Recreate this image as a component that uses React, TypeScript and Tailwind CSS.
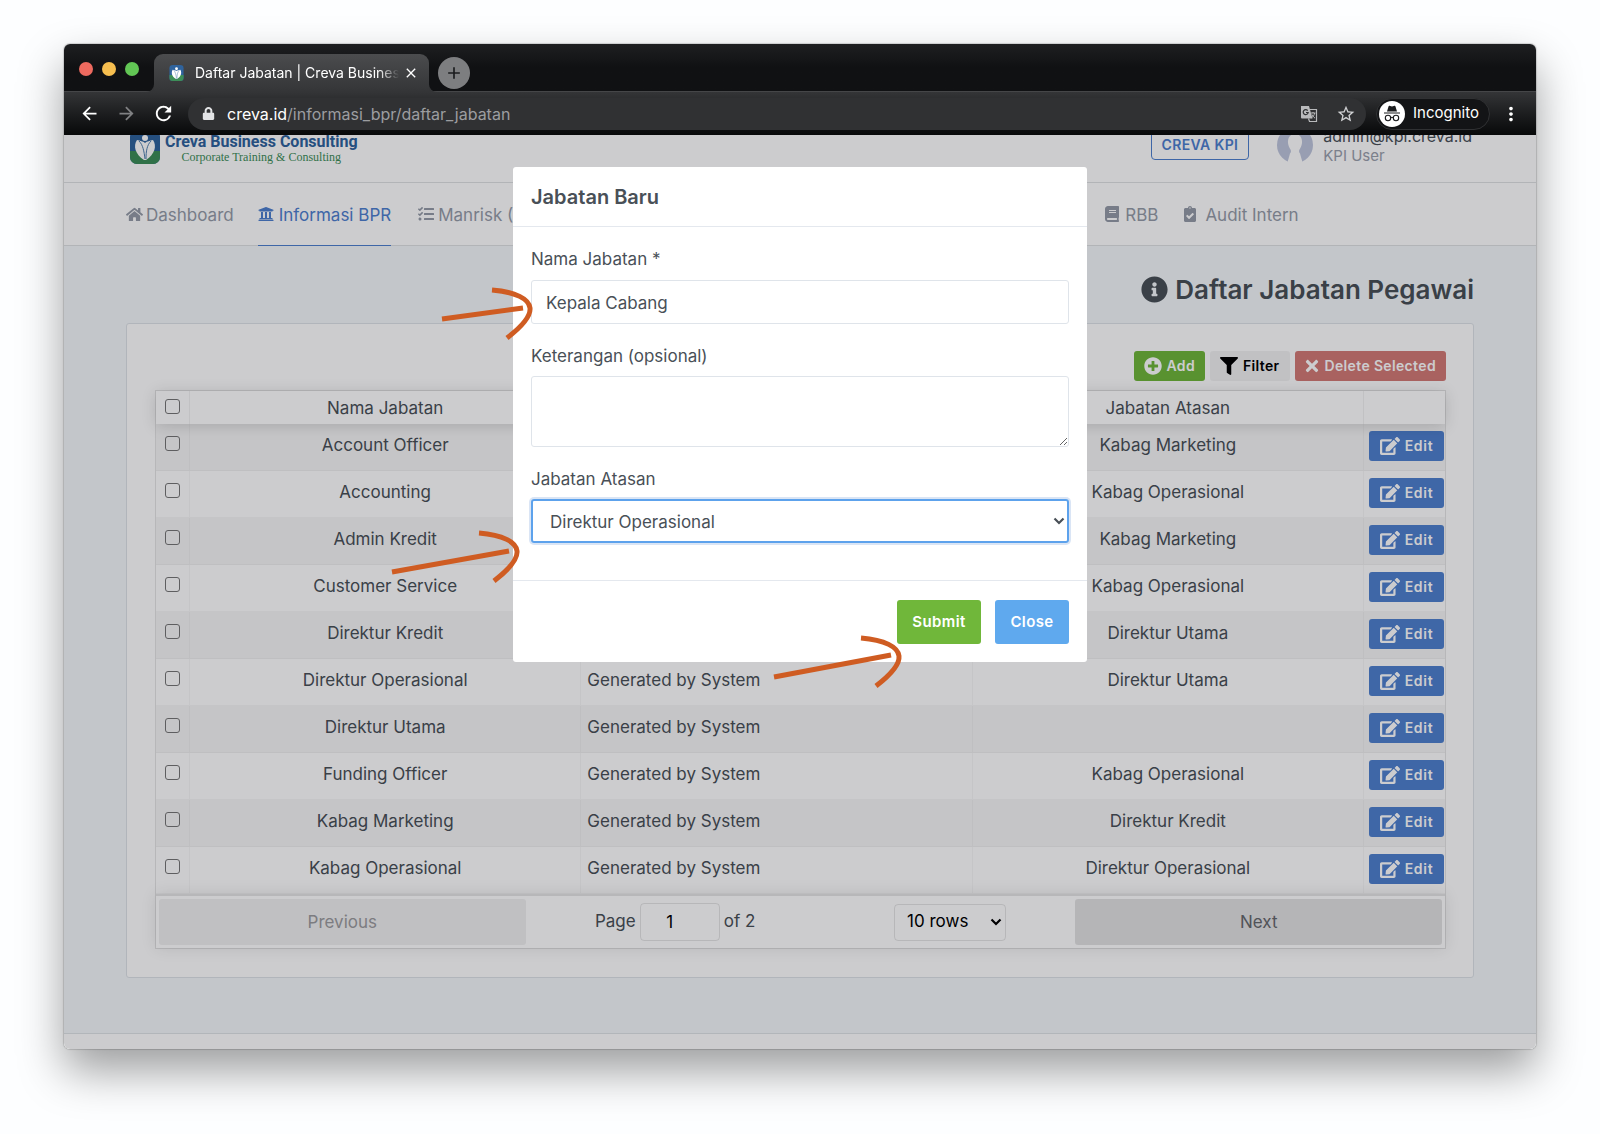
import React from "react";
import {
  FaBook,
  FaClipboardCheck,
  FaEdit,
  FaFilter,
  FaHome,
  FaInfoCircle,
  FaLock,
  FaPlusCircle,
  FaTasks,
  FaTimes,
  FaUniversity,
} from "react-icons/fa";
import { MdAdd, MdArrowBack, MdArrowForward, MdClose, MdMoreVert, MdRefresh, MdStarBorder } from "react-icons/md";

const rows = [
  { nama: "Account Officer", atasan: "Kabag Marketing" },
  { nama: "Accounting", atasan: "Kabag Operasional" },
  { nama: "Admin Kredit", atasan: "Kabag Marketing" },
  { nama: "Customer Service", atasan: "Kabag Operasional" },
  { nama: "Direktur Kredit", atasan: "Direktur Utama" },
  { nama: "Direktur Operasional", atasan: "Direktur Utama" },
  { nama: "Direktur Utama", atasan: "" },
  { nama: "Funding Officer", atasan: "Kabag Operasional" },
  { nama: "Kabag Marketing", atasan: "Direktur Kredit" },
  { nama: "Kabag Operasional", atasan: "Direktur Operasional" },
];

const LogoMark = ({ className }: { className: string }) => (
  <svg viewBox="0 0 30 34" className={className} aria-hidden="true">
    <rect width="30" height="34" rx="7" fill="#2f639d" />
    <path d="M0 21h30v6a7 7 0 0 1-7 7H7a7 7 0 0 1-7-7z" fill="#3d8e58" />
    <circle cx="15" cy="8" r="3" fill="#fff" />
    <path
      d="M7 10c-4 6-2 14 7 20h2c9-6 11-14 7-20-3 1-6 1-8 3-2-2-5-2-8-3z"
      fill="#fff"
    />
    <path d="M9 11c4 4 5 10 6 18M21 11c-4 4-5 10-5 18" fill="none" stroke="#4f7fae" strokeWidth="1" />
  </svg>
);

const TranslateIcon = () => (
  <svg viewBox="0 0 18 18" className="size-[18px] text-[#b9babc]" fill="none" aria-hidden="true">
    <path d="M9 4.500h7.500v12H9.500l-1-3" stroke="currentColor" strokeWidth="1.200" />
    <path d="M1 1h8l3.500 12.500H2a1 1 0 0 1-1-1z" fill="currentColor" />
    <path d="M7.700 5.600A2.500 2.500 0 1 0 8.200 7.500H6" stroke="#303133" strokeWidth="1.200" />
    <path d="M11 8h4.500M13 7v1M14.700 8c-.4 2-1.400 3.500-3 4.700M12 9.500c.7 1.500 1.800 2.700 3 3.700" stroke="currentColor" />
  </svg>
);

const Chevron = ({ className }: { className: string }) => (
  <svg viewBox="0 0 12 8" className={className} aria-hidden="true">
    <path d="M1.5 1.5 6 6l4.500-4.500" fill="none" stroke="currentColor" strokeWidth="2.200" />
  </svg>
);

const Arrow = ({ className, shaft }: { className: string; shaft: string }) => (
  <svg
    viewBox="0 0 132 56"
    className={`absolute h-14 w-[132px] pointer-events-none ${className}`}
    fill="none"
    stroke="#cf5c22"
    strokeWidth="5"
    aria-hidden="true"
  >
    <path d={shaft} />
    <path d="M89 5C113 7 126 14 127 23c1 9-10 20-23 30" />
  </svg>
);

const BrowserBar = () => {
  return (
    <div className="text-white">
      <div className="flex h-12 items-end bg-linear-to-b from-[#1e1f21] via-[#101113] to-[#101113] border-b border-[#454648]">
        <div className="mt-0.5 flex gap-[9px] self-center pl-[15px]">
          <span className="size-3.5 rounded-full bg-[#ed6a5f]" />
          <span className="size-3.5 rounded-full bg-[#f6be4f]" />
          <span className="size-3.5 rounded-full bg-[#62c655]" />
        </div>
        <div className="relative -mb-px ml-[15px] flex h-[38px] w-[275px] items-center rounded-t-[9px] bg-linear-to-b from-[#4b4c4e] to-[#343537] pl-[15px] pr-2.5">
          <svg viewBox="0 0 8 8" className="absolute bottom-0 -left-2 size-2" aria-hidden="true">
            <path d="M8 0v8H0a8 8 0 0 0 8-8z" fill="#343537" />
          </svg>
          <svg viewBox="0 0 8 8" className="absolute bottom-0 -right-2 size-2" aria-hidden="true">
            <path d="M0 0v8h8a8 8 0 0 1-8-8z" fill="#343537" />
          </svg>
          <LogoMark className="h-4 w-[15px]" />
          <span className="ml-[11px] flex-1 overflow-hidden whitespace-nowrap text-sm [mask-image:linear-gradient(to_right,black_90%,transparent)]">
            Daftar Jabatan | Creva Busines
          </span>
          <button type="button" aria-label="Close tab" className="ml-1">
            <MdClose className="size-4" />
          </button>
        </div>
        <button
          type="button"
          aria-label="New tab"
          className="mb-0.5 ml-[9px] flex size-8 items-center justify-center rounded-full bg-[#7d7e80] text-[#1b1c1e]"
        >
          <MdAdd className="size-5" stroke="currentColor" />
        </button>
      </div>

      <div className="flex h-[43px] items-center bg-linear-to-b from-[#343537] to-[#08090a] pl-[15px] pr-3.5">
        <button type="button" aria-label="Back">
          <MdArrowBack className="size-[21px]" />
        </button>
        <button type="button" aria-label="Forward" className="ml-4 text-[#808183]">
          <MdArrowForward className="size-[21px]" />
        </button>
        <button type="button" aria-label="Reload" className="ml-[15px]">
          <MdRefresh className="size-[23px]" />
        </button>
        <div className="ml-[13px] flex h-8 flex-1 items-center rounded-full bg-[#303133] pl-3.5 pr-2.5">
          <FaLock className="size-[13px] text-[#e2e3e5]" />
          <span className="ml-3 flex-1 text-base text-[#9c9da0]">
            <span className="text-white">creva.id</span>/informasi_bpr/daftar_jabatan
          </span>
          <TranslateIcon />
          <MdStarBorder className="ml-[18px] size-5 text-[#cfd0d2]" />
        </div>
        <div className="ml-2.5 flex h-8 items-center rounded-full border border-[#303133] bg-[#131416] pl-0.5 pr-2.5">
          <svg viewBox="0 0 26 26" className="size-[26px]" aria-hidden="true">
            <circle cx="13" cy="13" r="13" fill="#fff" />
            <path d="M9.500 5.500c.3-.9 1-.9 1.700-.5 1.200.5 2.400.5 3.600 0 .7-.4 1.400-.4 1.700.5l1.500 5H8z" fill="#1b1c1e" />
            <path d="M5 12h16" stroke="#1b1c1e" strokeWidth="1.200" />
            <circle cx="9" cy="17" r="2.700" fill="none" stroke="#1b1c1e" strokeWidth="1.100" />
            <circle cx="17" cy="17" r="2.700" fill="none" stroke="#1b1c1e" strokeWidth="1.100" />
            <path d="M11.700 16.700q1.300-.8 2.600 0" fill="none" stroke="#1b1c1e" strokeWidth="1.100" />
          </svg>
          <span className="ml-2 text-[15px]">Incognito</span>
        </div>
        <button type="button" aria-label="Menu" className="ml-2.5">
          <MdMoreVert className="size-[22px]" />
        </button>
      </div>
    </div>
  );
};

const PageHeader = () => {
  return (
    <>
      <header className="-mt-6 flex h-[72px] items-center border-b border-[#dfe1e3] bg-white pb-1 pl-[66px] pr-16">
        <a href="#" className="flex items-center gap-[5px] pt-1">
          <LogoMark className="h-[34px] w-[30px]" />
          <span className="flex flex-col items-center pt-[3px]">
            <span className="font-[Roboto,sans-serif] text-base font-bold leading-[18px] text-[#2f639d]">
              Creva Business Consulting
            </span>
            <span className="font-['Liberation_Serif',serif] text-xs leading-3 text-[#3d8e58]">
              Corporate Training &amp; Consulting
            </span>
          </span>
        </a>
        <button
          type="button"
          className="ml-auto h-[30px] rounded border border-[#4e80cf] px-2.5 text-sm font-semibold tracking-wide text-[#4e80cf]"
        >
          CREVA KPI
        </button>
        <svg viewBox="0 0 36 36" className="ml-7 size-9" aria-hidden="true">
          <circle cx="18" cy="18" r="18" fill="#bfc6dd" />
          <path d="M18 7c-5 0-7.500 4-7 9 .3 3 1.500 5 2.500 6.500.8 1.500.5 3-.5 4L10 37h16l-3-10.500c-1-1-1.300-2.500-.5-4 1-1.500 2.200-3.500 2.500-6.500.5-5-2-9-7-9z" fill="#fff" />
        </svg>
        <div className="ml-2.5 flex flex-col pt-0.5">
          <span className="text-base leading-5 text-[#495057]">admin@kpi.creva.id</span>
          <span className="text-[15px] leading-5 text-[#9aa0ac]">KPI User</span>
        </div>
      </header>

      <nav className="flex h-[63px] items-stretch border-b border-[#dfe1e3] bg-white pl-[62px] text-[17px] text-[#959ca8]">
        <a href="#" className="flex items-center gap-[3px] pt-1">
          <FaHome className="mb-1 size-[17px]" />
          Dashboard
        </a>
        <a href="#" className="-mb-px ml-6 flex items-center gap-[5px] border-b border-[#4e80cf] pt-1 text-[#4e80cf]">
          <FaUniversity className="mb-1 size-4" />
          Informasi BPR
        </a>
        <a href="#" className="ml-[27px] flex w-[686px] items-center gap-1 pt-1">
          <FaTasks className="mb-1 size-4" />
          Manrisk (SOP)
        </a>
        <a href="#" className="flex items-center gap-[5px] pt-1">
          <FaBook className="mb-1 size-4" />
          RBB
        </a>
        <a href="#" className="ml-6 flex items-center gap-[7px] pt-1">
          <FaClipboardCheck className="mb-1 size-4" />
          Audit Intern
        </a>
      </nav>
    </>
  );
};

const JabatanTable = () => {
  return (
    <div className="mt-[9px] border border-black/10">
      <table className="w-full table-fixed border-separate border-spacing-0 text-[17px] leading-6">
        <colgroup>
          <col className="w-[34px]" />
          <col />
          <col />
          <col />
          <col className="w-[81px]" />
        </colgroup>
        <thead className="relative shadow-[0_2px_15px_rgba(0,0,0,0.15)]">
          <tr className="h-[33px]">
            <th className="border-r border-black/5 align-top pt-2">
              <input
                type="checkbox"
                aria-label="Pilih semua"
                className="mx-auto block size-[15px] appearance-none rounded-[3px] border border-[#767676]"
              />
            </th>
            <th className="border-r border-black/5 font-normal">Nama Jabatan</th>
            <th className="border-r border-black/5 font-normal">Keterangan</th>
            <th className="border-r border-black/5 font-normal">Jabatan Atasan</th>
            <th />
          </tr>
        </thead>
        <tbody>
          {rows.map((row) => (
            <tr key={row.nama} className="h-[47px] odd:bg-black/3">
              <td className="border-b border-r border-black/3 align-top pt-3">
                <input
                  type="checkbox"
                  aria-label={row.nama}
                  className="mx-auto block size-[15px] appearance-none rounded-[3px] border border-[#767676]"
                />
              </td>
              <td className="border-b border-r border-black/3 pb-1 text-center">{row.nama}</td>
              <td className="border-b border-r border-black/3 pb-1 pl-1.5">Generated by System</td>
              <td className="border-b border-r border-black/3 pb-1 text-center">{row.atasan}</td>
              <td className="border-b border-black/3 pb-0.5 pl-[5px]">
                <button
                  type="button"
                  className="flex h-[30px] w-[75px] items-center justify-center gap-[5px] rounded-[3px] bg-[#4f81cf] text-sm font-semibold tracking-wider text-white"
                >
                  <FaEdit className="size-5" />
                  Edit
                </button>
              </td>
            </tr>
          ))}
        </tbody>
      </table>

      <div className="flex items-center border-t-2 border-black/10 p-[3px] text-[17px] shadow-[0_0_15px_rgba(0,0,0,0.1)]">
        <button type="button" disabled className="h-[46px] flex-1 rounded-[3px] bg-black/6 pt-0.5 text-[#9c9c9e]">
          Previous
        </button>
        <div className="flex flex-[1.5] items-center justify-around">
          <label className="flex items-center gap-1">
            Page
            <input
              type="text"
              defaultValue="1"
              className="h-[38px] w-20 rounded border border-black/10 pr-5 text-center text-black"
            />
            of 2
          </label>
          <div className="relative">
            <select
              aria-label="Rows per page"
              className="h-[37px] w-28 appearance-none rounded border border-black/10 pl-3 text-black"
            >
              <option>10 rows</option>
            </select>
            <Chevron className="pointer-events-none absolute right-1 top-[14px] h-2 w-3 text-black" />
          </div>
        </div>
        <button type="button" className="h-[46px] flex-1 rounded-[3px] bg-black/11 pt-0.5 text-[#66686c]">
          Next
        </button>
      </div>
    </div>
  );
};

const JabatanModal = () => {
  return (
    <div className="absolute inset-0 flex items-start justify-center bg-[#00000a]/20 pt-8">
      <div
        role="dialog"
        aria-labelledby="modal-title"
        className="relative w-full max-w-[574px] rounded-[3px] bg-white text-[17px] leading-6 text-[#495057]"
      >
        <h2 id="modal-title" className="border-b border-[#e4e8ee] px-[18px] pb-[15px] pt-4 text-xl font-semibold">
          Jabatan Baru
        </h2>
        <form className="flex flex-col px-[18px] pb-[37px] pt-5">
          <label htmlFor="nama">Nama Jabatan *</label>
          <input
            id="nama"
            type="text"
            defaultValue="Kepala Cabang"
            className="mt-[9px] h-[44px] rounded-[3px] border border-[#dfe4ea] px-3.5 pt-0.5"
          />
          <label htmlFor="keterangan" className="mt-5">
            Keterangan (opsional)
          </label>
          <textarea id="keterangan" className="mt-2 h-[71px] rounded-[3px] border border-[#dfe4ea] px-3.5" />
          <label htmlFor="atasan" className="mt-5">
            Jabatan Atasan
          </label>
          <div className="relative mt-2">
            <select
              id="atasan"
              className="h-[44px] w-full appearance-none rounded-[3px] border-2 border-[#5da2ec] pl-[17px] pt-0.5 shadow-[0_0_0_2px_rgba(70,127,207,0.2)]"
            >
              <option>Direktur Operasional</option>
            </select>
            <Chevron className="pointer-events-none absolute right-1 top-[18px] h-2 w-3" />
          </div>
        </form>
        <div className="flex justify-end gap-3.5 border-t border-[#e4e8ee] px-[18px] pb-[18px] pt-[19px] text-[15px] font-semibold tracking-wide text-white">
          <button type="button" className="h-[44px] w-[84px] rounded-[3px] bg-[#70b73a]">
            Submit
          </button>
          <button type="button" className="h-[44px] w-[74px] rounded-[3px] bg-[#5fa9ee]">
            Close
          </button>
        </div>

        <Arrow className="-left-[110px] top-[118px]" shaft="M39 34 120 23" />
        <Arrow className="-left-[123px] top-[361px]" shaft="M2 44 119 23" />
        <Arrow className="left-[259px] top-[466px]" shaft="M2 44 119 22" />
      </div>
    </div>
  );
};

export default function App() {
  return (
    <div className="min-h-screen bg-[#fdfeff] px-16 pb-[85px] pt-11 font-[Inter,'Liberation_Sans',sans-serif]">
      <div className="overflow-hidden rounded-md shadow-[0_22px_45px_rgba(0,0,0,0.38),0_0_1px_1px_rgba(0,0,0,0.15)]">
        <BrowserBar />
        <div className="relative overflow-hidden bg-[#f4f8fa] text-[#495057]">
          <PageHeader />
          <main className="px-[62px] pb-[55px]">
            <h1 className="flex h-[77px] items-center justify-end gap-[7px] pt-2.5 text-[26px] font-semibold">
              <FaInfoCircle className="size-[27px]" />
              Daftar Jabatan Pegawai
            </h1>
            <section className="rounded-[3px] border border-[#dee3e8] bg-white pb-7 pl-7 pr-[27px] pt-[27px]">
              <div className="flex justify-end gap-[5px] text-sm font-semibold tracking-wide text-white">
                <button type="button" className="flex h-[30px] items-center gap-1 rounded-[3px] bg-[#70b73a] px-2.5">
                  <FaPlusCircle className="size-[18px]" />
                  Add
                </button>
                <button type="button" className="flex h-[30px] items-center gap-[5px] rounded-[3px] bg-black/5 px-2.5 text-black">
                  <FaFilter className="size-[18px]" />
                  Filter
                </button>
                <button type="button" className="flex h-[30px] items-center gap-1 rounded-[3px] bg-[#d47b76] pl-2 pr-2.5">
                  <FaTimes className="size-[18px]" />
                  Delete Selected
                </button>
              </div>
              <JabatanTable />
            </section>
          </main>
          <footer className="h-4 border-t border-[#dfe4e6] bg-white" />
          <JabatanModal />
        </div>
      </div>
    </div>
  );
}
